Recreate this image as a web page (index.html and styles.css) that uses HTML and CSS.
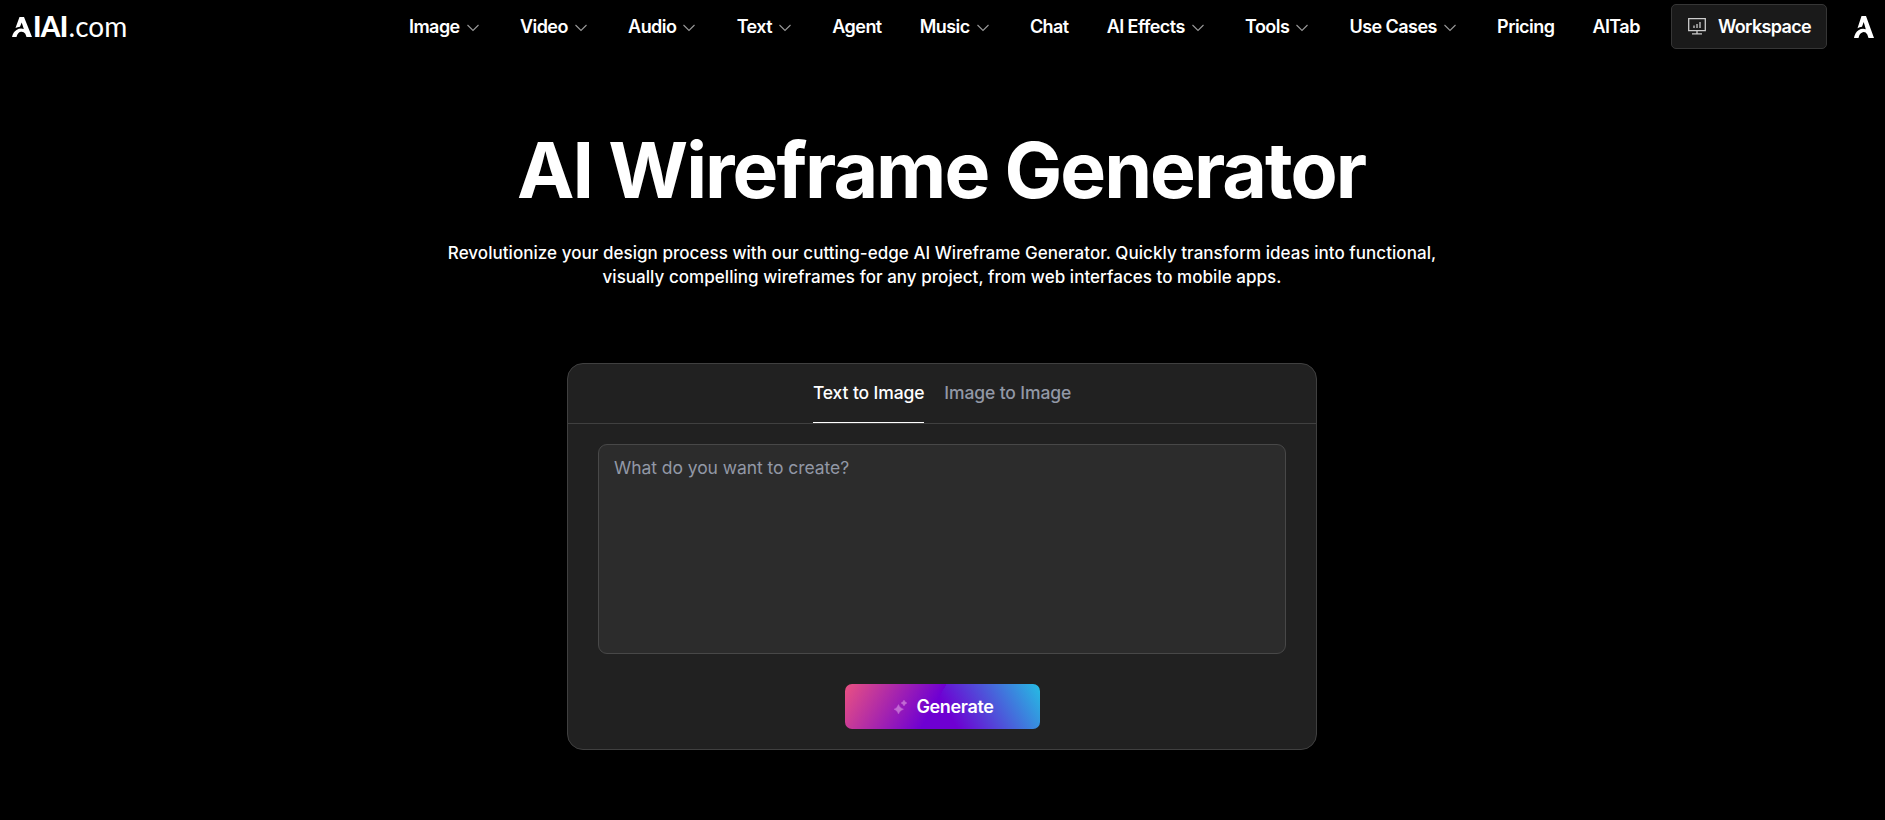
FILE: index.html
```html
<!DOCTYPE html>
<html lang="en">
<head>
    <meta charset="UTF-8">
    <meta name="viewport" content="width=device-width, initial-scale=1.0">
    <title>AI Wireframe Generator</title>
    <link rel="stylesheet" href="styles.css">
</head>
<body>
    <svg class="symbols">
        <symbol id="chevron" viewBox="0 0 12 8"><path d="M.5 1L6 6.500 11.500 1" fill="none" stroke="currentColor" stroke-width="1.1"/></symbol>
        <symbol id="mark" viewBox="0 0 20 22" preserveAspectRatio="none"><path d="M7.500 0h4.500L20 22h-5.500l-1.200-3.600Q11.500 15.600 8.800 16.200 5.500 17 4.500 22H0Q1 16.500 4.500 14.200 8 12 11.800 13.200L9.700 6 8 10.800Q5.500 11 3.500 12.200z" fill="currentColor"/></symbol>
    </svg>
    <header class="header">
        <a class="logo"><svg class="logo-mark"><use href="#mark"/></svg><span class="logo-bold">IAI</span><span class="logo-thin">.com</span></a>
        <nav class="nav">
            <a>Image<svg class="chevron"><use href="#chevron"/></svg></a>
            <a>Video<svg class="chevron"><use href="#chevron"/></svg></a>
            <a>Audio<svg class="chevron"><use href="#chevron"/></svg></a>
            <a>Text<svg class="chevron"><use href="#chevron"/></svg></a>
            <a>Agent</a>
            <a>Music<svg class="chevron"><use href="#chevron"/></svg></a>
            <a>Chat</a>
            <a>AI Effects<svg class="chevron"><use href="#chevron"/></svg></a>
            <a>Tools<svg class="chevron"><use href="#chevron"/></svg></a>
            <a>Use Cases<svg class="chevron"><use href="#chevron"/></svg></a>
            <a>Pricing</a>
            <a>AITab</a>
        </nav>
        <a class="workspace">
            <svg class="workspace-icon" viewBox="0 0 18 17" fill="none" stroke="currentColor" stroke-width="1.3"><path d="M.7.7h16.600v12H.7zM9 12.700v3M4 15.800h10M6 7.500v2.500M9 6v4M12 4v6"/></svg>
            Workspace
        </a>
        <svg class="avatar"><use href="#mark"/></svg>
    </header>
    <main class="main">
        <h1>AI Wireframe Generator</h1>
        <p class="intro">
            Revolutionize your design process with our cutting-edge AI Wireframe Generator. Quickly transform ideas into functional,<br>
            visually compelling wireframes for any project, from web interfaces to mobile apps.
        </p>
        <section class="card">
            <div class="tabs">
                <button class="tab active">Text to Image</button>
                <button class="tab">Image to Image</button>
            </div>
            <div class="card-body">
                <textarea class="prompt" placeholder="What do you want to create?"></textarea>
                <button class="generate">
                    <svg class="sparkle" viewBox="0 0 13 14"><path d="M4.500 4.500Q5.800 8.200 9.500 9.200 5.800 10.200 4.500 14 3.200 10.200 0 9.200 3.200 8.200 4.500 4.500zM10 0Q10.700 2.200 13 3 10.700 3.800 10 6 9.300 3.800 7 3 9.300 2.200 10 0z" fill="currentColor" stroke="currentColor" stroke-width=".4"/></svg>
                    Generate
                </button>
            </div>
        </section>
    </main>
</body>
</html>
```
FILE: styles.css
```css
* {
    box-sizing: border-box;
}

body {
    margin: 0;
    min-height: 100vh;
    background-color: #000;
    color: #fff;
    font-family: Inter, "Liberation Sans", sans-serif;
    overflow: hidden;
}
.symbols {
    display: none;
}
.header {
    display: flex;
    align-items: center;
    height: 53px;
    padding-left: 12px;
    padding-right: 11px;
}
.logo {
    display: flex;
    align-items: baseline;
    width: 397px;
    padding-bottom: 2px;
    line-height: 28px;
}
.logo-mark {
    width: 20px;
    height: 20px;
}
.logo-bold {
    margin-left: 1px;
    font-family: Lato, sans-serif;
    font-weight: 900;
    font-size: 28px;
    letter-spacing: -0.7px;
}
.logo-thin {
    margin-left: 1px;
    font-family: Lato, sans-serif;
    font-weight: 400;
    font-size: 28px;
}
.nav {
    display: flex;
    gap: 38px;
    padding-bottom: 1px;
    font-size: 18px;
    font-weight: 600;
    letter-spacing: -0.55px;
    white-space: nowrap;
}
.nav a {
    display: flex;
    align-items: center;
}
.chevron {
    width: 12px;
    height: 8px;
    margin: 3px 3.25px 0 7px;
    color: #999;
}
.workspace {
    display: flex;
    align-items: center;
    gap: 12px;
    width: 156px;
    height: 45px;
    margin-left: auto;
    padding-left: 16px;
    border: 1px solid #363636;
    border-radius: 5px;
    background-color: #1a1a1a;
    font-size: 18px;
    font-weight: 600;
    letter-spacing: -0.65px;
}
.workspace-icon {
    width: 18px;
    height: 17px;
    color: #ccc;
}
.avatar {
    width: 20px;
    height: 22px;
    margin-left: 27px;
}
.main {
    display: flex;
    flex-direction: column;
    align-items: center;
    padding-right: 1px;
}
h1 {
    margin: 69px 2px 0 0;
    font-size: 77px;
    font-weight: 650;
    line-height: 96px;
    letter-spacing: -2px;
    white-space: nowrap;
}
.intro {
    margin: 23px 0 0;
    font-size: 17px;
    font-weight: 500;
    line-height: 24px;
    letter-spacing: 0.04px;
    text-align: center;
    white-space: nowrap;
}
.card {
    width: 750px;
    height: 387px;
    margin-top: 74px;
    border: 1px solid #404040;
    border-radius: 16px;
    background-color: #212121;
}
.tabs {
    display: flex;
    justify-content: center;
    gap: 20px;
    height: 60px;
    border-bottom: 1px solid #404040;
}
button {
    font-family: inherit;
    border: none;
    background: none;
}
.tab {
    padding: 0 0 2px;
    border-bottom: 1px solid transparent;
    color: #9298a6;
    font-size: 17.5px;
    font-weight: 500;
    letter-spacing: -0.12px;
}
.tab.active {
    border-color: #fff;
    color: #fff;
}
.card-body {
    display: flex;
    flex-direction: column;
    align-items: center;
    padding: 20px 30px;
}
.prompt {
    width: 100%;
    height: 210px;
    padding: 11px 15px;
    border: 1px solid #484848;
    border-radius: 9px;
    background-color: #2c2c2c;
    font-family: inherit;
    font-size: 17.5px;
    line-height: 24px;
    letter-spacing: -0.06px;
    resize: none;
}
.prompt::placeholder {
    color: #9298a6;
}
.generate {
    display: flex;
    align-items: center;
    justify-content: center;
    gap: 9px;
    width: 195px;
    height: 45px;
    margin-top: 30px;
    padding: 0 4px 0 8px;
    border-radius: 7px;
    background: linear-gradient(120deg, #ea5182, #6e00d2 46%, transparent 46%), linear-gradient(60deg, #6e00d2 51%, #25bde3);
    color: #fff;
    font-size: 18px;
    font-weight: 600;
    letter-spacing: -0.35px;
}
.sparkle {
    width: 13px;
    height: 14px;
    color: #c26bd4;
}
```
